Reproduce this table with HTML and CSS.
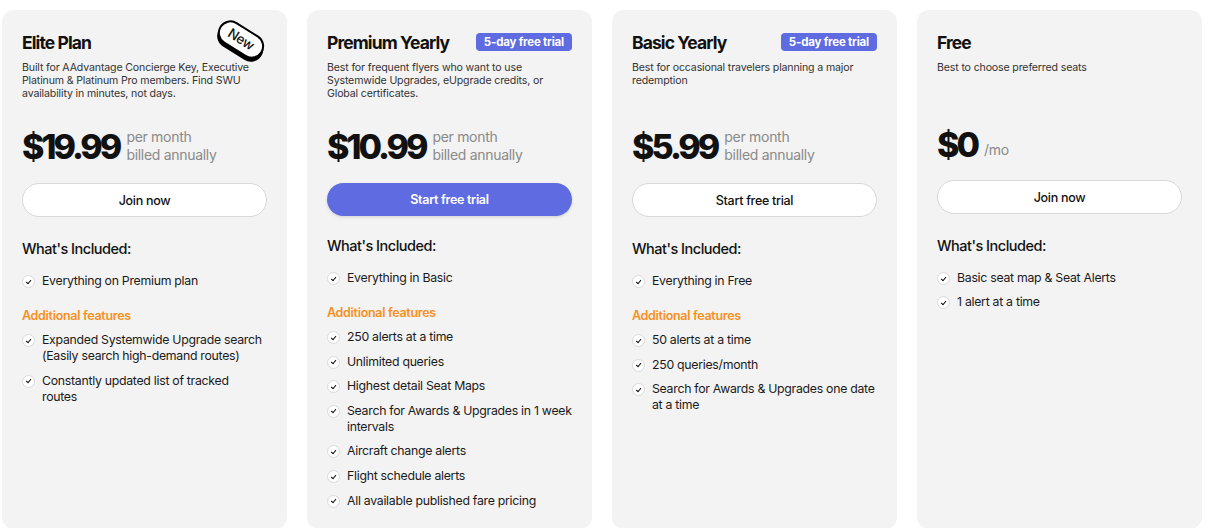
FILE: index.html
```html
<!DOCTYPE html>
<html>
<head>
<meta charset="utf-8">
<link rel="stylesheet" href="styles.css">
</head>
<body>
<div class="plans">
  <div class="card">
    <div class="new-badge">New</div>
    <div class="head">
      <h2 class="title">Elite Plan</h2>
    </div>
    <p class="desc">Built for AAdvantage Concierge Key, Executive Platinum &amp; Platinum Pro members. Find SWU availability in minutes, not days.</p>
    <div class="price">
      <span class="amount">$19.99</span>
      <span class="per">per month<br>billed annually</span>
    </div>
    <button class="btn">Join now</button>
    <h3 class="included">What's Included:</h3>
    <ul class="list first">
      <li><span class="check"></span>Everything on Premium plan</li>
    </ul>
    <h4 class="additional">Additional features</h4>
    <ul class="list">
      <li><span class="check"></span>Expanded Systemwide Upgrade search (Easily search high-demand routes)</li>
      <li><span class="check"></span>Constantly updated list of tracked<br>routes</li>
    </ul>
  </div>

  <div class="card">
    <div class="head">
      <h2 class="title">Premium Yearly</h2>
      <span class="trial">5-day free trial</span>
    </div>
    <p class="desc">Best for frequent flyers who want to use Systemwide Upgrades, eUpgrade credits, or Global certificates.</p>
    <div class="price">
      <span class="amount">$10.99</span>
      <span class="per">per month<br>billed annually</span>
    </div>
    <button class="btn primary">Start free trial</button>
    <h3 class="included">What's Included:</h3>
    <ul class="list first">
      <li><span class="check"></span>Everything in Basic</li>
    </ul>
    <h4 class="additional">Additional features</h4>
    <ul class="list">
      <li><span class="check"></span>250 alerts at a time</li>
      <li><span class="check"></span>Unlimited queries</li>
      <li><span class="check"></span>Highest detail Seat Maps</li>
      <li><span class="check"></span>Search for Awards &amp; Upgrades in 1 week intervals</li>
      <li><span class="check"></span>Aircraft change alerts</li>
      <li><span class="check"></span>Flight schedule alerts</li>
      <li><span class="check"></span>All available published fare pricing</li>
    </ul>
  </div>

  <div class="card">
    <div class="head">
      <h2 class="title">Basic Yearly</h2>
      <span class="trial">5-day free trial</span>
    </div>
    <p class="desc">Best for occasional travelers planning a major redemption</p>
    <div class="price">
      <span class="amount">$5.99</span>
      <span class="per">per month<br>billed annually</span>
    </div>
    <button class="btn">Start free trial</button>
    <h3 class="included">What's Included:</h3>
    <ul class="list first">
      <li><span class="check"></span>Everything in Free</li>
    </ul>
    <h4 class="additional">Additional features</h4>
    <ul class="list">
      <li><span class="check"></span>50 alerts at a time</li>
      <li><span class="check"></span>250 queries/month</li>
      <li><span class="check"></span>Search for Awards &amp; Upgrades one date at a time</li>
    </ul>
  </div>

  <div class="card">
    <div class="head">
      <h2 class="title">Free</h2>
    </div>
    <p class="desc">Best to choose preferred seats</p>
    <div class="price">
      <span class="amount">$0</span>
      <span class="per mo">/mo</span>
    </div>
    <button class="btn">Join now</button>
    <h3 class="included">What's Included:</h3>
    <ul class="list first">
      <li><span class="check"></span>Basic seat map &amp; Seat Alerts</li>
      <li><span class="check"></span>1 alert at a time</li>
    </ul>
  </div>
</div>
</body>
</html>
```

FILE: styles.css
```css
* { box-sizing: border-box; }
html, body { margin: 0; padding: 0; background: #fff; }
body {
  font-family: Inter, "Liberation Sans", sans-serif;
  color: #111;
  padding: 10px 7px 0 2px;
}
.plans {
  display: grid;
  grid-template-columns: repeat(4, 285px);
  column-gap: 20px;
  height: 518px;
}
.card {
  position: relative;
  background: #f3f3f3;
  border-radius: 12px;
  padding: 21px 20px 20px;
  display: flex;
  flex-direction: column;
}
.head {
  display: flex;
  align-items: center;
  justify-content: space-between;
  height: 22px;
}
.title {
  margin: 0;
  font-size: 17.5px;
  font-weight: 700;
  letter-spacing: -0.9px;
}
.trial {
  background: #5f6be0;
  color: #fff;
  font-size: 11.5px;
  font-weight: 700;
  letter-spacing: -0.2px;
  height: 18px;
  line-height: 18px;
  padding: 0 8px;
  border-radius: 4px;
}
.new-badge {
  position: absolute;
  top: 17px;
  right: 21px;
  width: 50px;
  height: 25px;
  border: 2px solid #000;
  border-radius: 13px;
  background: #fff;
  box-shadow: 1px 3px 0 #000;
  transform: rotate(32deg);
  font-size: 13.5px;
  font-weight: 500;
  text-align: center;
  line-height: 20px;
  letter-spacing: -0.3px;
}
.desc {
  margin: 8px 0 0;
  font-size: 10.6px;
  line-height: 13px;
  color: #333;
  letter-spacing: -0.15px;
  min-height: 39px;
}
.price {
  display: flex;
  align-items: center;
  margin-top: 28px;
  gap: 4px;
}
.amount {
  font-size: 34px;
  font-weight: 800;
  letter-spacing: -3px;
  line-height: 33px;
  padding-right: 3px;
}
.per {
  font-size: 14px;
  line-height: 18px;
  color: #8a8a8a;
  letter-spacing: -0.3px;
}
.per.mo { margin-top: 10px; }
.btn {
  margin-top: 19px;
  height: 34px;
  width: 100%;
  border-radius: 17px;
  border: 1px solid #d8d8d8;
  background: #fff;
  font-family: inherit;
  font-size: 12.5px;
  font-weight: 500;
  letter-spacing: -0.3px;
  color: #111;
  flex-shrink: 0;
}
.btn.primary {
  background: #5f6be0;
  border: none;
  height: 33px;
  margin-bottom: -2px;
  color: #fff;
  font-weight: 600;
  box-shadow: 0 1px 3px rgba(0,0,0,0.15);
}
.included {
  margin: 22px 0 0;
  font-size: 14.5px;
  font-weight: 500;
  letter-spacing: -0.5px;
  line-height: 20px;
}
.additional {
  margin: 19px 0 0;
  font-size: 12.5px;
  font-weight: 600;
  color: #f7901e;
  letter-spacing: -0.3px;
  line-height: 16px;
}
.list {
  list-style: none;
  margin: 8px 0 0;
  padding: 0;
  display: flex;
  flex-direction: column;
  gap: 8.6px;
}
.list.first { margin-top: 14px; gap: 8px; }
.list li {
  position: relative;
  padding-left: 20px;
  font-size: 12.3px;
  line-height: 16px;
  letter-spacing: -0.28px;
  color: #1a1a1a;
}
.check {
  position: absolute;
  left: 0;
  top: 2px;
  width: 13px;
  height: 13px;
  border-radius: 50%;
  background: #fff;
  border: 1px solid #dadada;
}
.check::after {
  content: "";
  position: absolute;
  left: 3.6px;
  top: 2.6px;
  width: 2.3px;
  height: 4.2px;
  border-right: 1.1px solid #111;
  border-bottom: 1.1px solid #111;
  transform: rotate(40deg);
}
```
